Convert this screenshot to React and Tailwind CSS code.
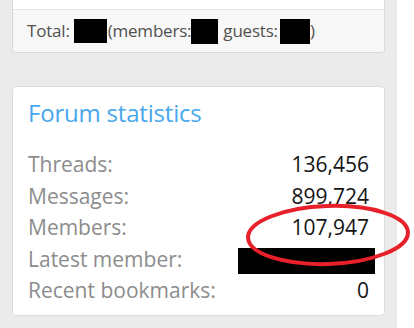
const stats = [
  { label: "Threads:", value: "136,456" },
  { label: "Messages:", value: "899,724" },
  { label: "Members:", value: "107,947" },
  { label: "Latest member:", value: null },
  { label: "Recent bookmarks:", value: "0" },
];

const Redacted = ({ className }) => <span className={`inline-block bg-black ${className}`} />;

const App = () => {
  return (
    <div className="relative flex h-[328px] w-[414px] overflow-hidden font-['Open_Sans',sans-serif]">
      <div className="flex-1 bg-[#ebebeb] pl-3 pr-[12px]">
        {/* online users card (cut off at the top) */}
        <div className="rounded-b-[4px] border-x border-b border-[#d8d8d8] bg-white">
          <div className="h-[9px]" />
          <div className="flex h-[43px] items-center rounded-b-[4px] border-t border-[#e4e4e4] bg-[#f8f8f8] px-[14px] text-[17px] tracking-[-0.2px] text-[#505050]">
            <span>Total:</span>
            <Redacted className="ml-[4px] h-[24px] w-[33px]" />
            <span className="ml-[1px]">(members:</span>
            <Redacted className="h-[25px] w-[27px]" />
            <span className="ml-[5px]">guests:</span>
            <Redacted className="ml-[2px] h-[25px] w-[30px]" />
            <span>)</span>
          </div>
        </div>

        {/* forum statistics */}
        <div className="mt-[33px] rounded-[4px] border border-[#dcdcdc] bg-white px-[15px] pb-[8px] pt-[8px]">
          <h3 className="text-[24px] leading-[36px] tracking-[-0.2px] text-[#47a7eb]">Forum statistics</h3>
          <dl className="mt-[18px] flex flex-col">
            {stats.map((s) => (
              <div key={s.label} className="flex h-[31.5px] items-center justify-between text-[21px]">
                <dt className="text-[#8c8c8c]">{s.label}</dt>
                <dd className="text-[#141414]">
                  {s.value ?? <Redacted className="mr-[-6px] h-[26px] w-[137px] align-middle" />}
                </dd>
              </div>
            ))}
          </dl>
        </div>
      </div>
      <div className="w-[17px] bg-white" />

      {/* hand-drawn red circle */}
      <svg className="pointer-events-none absolute left-[244px] top-[202px]" width="170" height="68" viewBox="0 0 170 68">
        <ellipse cx="84" cy="33" rx="80" ry="29" fill="none" stroke="#e8202a" strokeWidth="4" transform="rotate(-2 84 33)" />
      </svg>
    </div>
  );
};

export default App;
